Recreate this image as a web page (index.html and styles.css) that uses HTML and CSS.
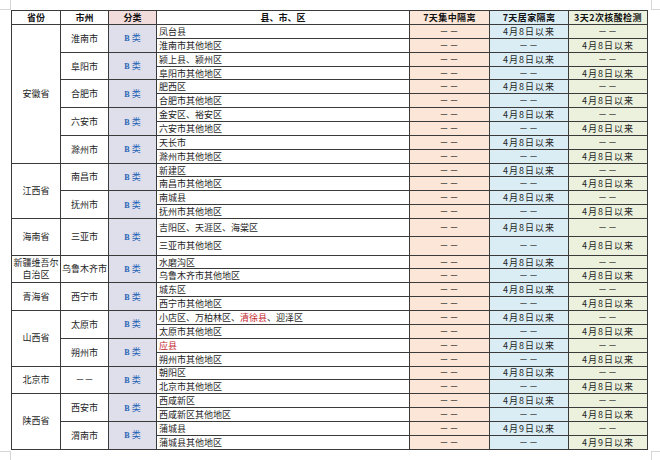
FILE: index.html
```html
<!DOCTYPE html>
<html lang="zh-CN">
<head>
<meta charset="utf-8">
<title>风险地区管控表</title>
<link rel="stylesheet" href="styles.css">
</head>
<body>
<div class="page">
  <span class="mark mark-tl"></span>
  <span class="mark mark-tr"></span>
  <span class="mark mark-bl"></span>
  <span class="mark mark-br"></span>
  <table class="t">
    <colgroup>
      <col class="w-p"><col class="w-c"><col class="w-k"><col class="w-a"><col class="w-x"><col class="w-y"><col class="w-z">
    </colgroup>
    <thead>
      <tr class="hd">
        <th>省份</th><th>市州</th><th class="k-h">分类</th><th>县、市、区</th><th class="x">7天集中隔离</th><th class="y">7天居家隔离</th><th class="z">3天2次核酸检测</th>
      </tr>
    </thead>
    <tbody>
      <tr><td rowspan="10" class="p">安徽省</td><td rowspan="2">淮南市</td><td rowspan="2" class="k"><b>B</b>类</td><td class="a">凤台县</td><td class="x">－－</td><td class="y">4月8日以来</td><td class="z">－－</td></tr>
      <tr><td class="a">淮南市其他地区</td><td class="x">－－</td><td class="y">－－</td><td class="z">4月8日以来</td></tr>
      <tr><td rowspan="2">阜阳市</td><td rowspan="2" class="k"><b>B</b>类</td><td class="a">颍上县、颍州区</td><td class="x">－－</td><td class="y">4月8日以来</td><td class="z">－－</td></tr>
      <tr><td class="a">阜阳市其他地区</td><td class="x">－－</td><td class="y">－－</td><td class="z">4月8日以来</td></tr>
      <tr><td rowspan="2">合肥市</td><td rowspan="2" class="k"><b>B</b>类</td><td class="a">肥西区</td><td class="x">－－</td><td class="y">4月8日以来</td><td class="z">－－</td></tr>
      <tr><td class="a">合肥市其他地区</td><td class="x">－－</td><td class="y">－－</td><td class="z">4月8日以来</td></tr>
      <tr><td rowspan="2">六安市</td><td rowspan="2" class="k"><b>B</b>类</td><td class="a">金安区、裕安区</td><td class="x">－－</td><td class="y">4月8日以来</td><td class="z">－－</td></tr>
      <tr><td class="a">六安市其他地区</td><td class="x">－－</td><td class="y">－－</td><td class="z">4月8日以来</td></tr>
      <tr><td rowspan="2">滁州市</td><td rowspan="2" class="k"><b>B</b>类</td><td class="a">天长市</td><td class="x">－－</td><td class="y">4月8日以来</td><td class="z">－－</td></tr>
      <tr><td class="a">滁州市其他地区</td><td class="x">－－</td><td class="y">－－</td><td class="z">4月8日以来</td></tr>

      <tr><td rowspan="4" class="p">江西省</td><td rowspan="2">南昌市</td><td rowspan="2" class="k"><b>B</b>类</td><td class="a">新建区</td><td class="x">－－</td><td class="y">4月8日以来</td><td class="z">－－</td></tr>
      <tr><td class="a">南昌市其他地区</td><td class="x">－－</td><td class="y">－－</td><td class="z">4月8日以来</td></tr>
      <tr><td rowspan="2">抚州市</td><td rowspan="2" class="k"><b>B</b>类</td><td class="a">南城县</td><td class="x">－－</td><td class="y">4月8日以来</td><td class="z">－－</td></tr>
      <tr><td class="a">抚州市其他地区</td><td class="x">－－</td><td class="y">－－</td><td class="z">4月8日以来</td></tr>

      <tr class="tall"><td rowspan="2" class="p">海南省</td><td rowspan="2">三亚市</td><td rowspan="2" class="k"><b>B</b>类</td><td class="a">吉阳区、天涯区、海棠区</td><td class="x">－－</td><td class="y">4月8日以来</td><td class="z">－－</td></tr>
      <tr class="tall"><td class="a">三亚市其他地区</td><td class="x">－－</td><td class="y">－－</td><td class="z">4月8日以来</td></tr>

      <tr><td rowspan="2" class="p">新疆维吾尔<br>自治区</td><td rowspan="2">乌鲁木齐市</td><td rowspan="2" class="k"><b>B</b>类</td><td class="a">水磨沟区</td><td class="x">－－</td><td class="y">4月8日以来</td><td class="z">－－</td></tr>
      <tr><td class="a">乌鲁木齐市其他地区</td><td class="x">－－</td><td class="y">－－</td><td class="z">4月8日以来</td></tr>

      <tr><td rowspan="2" class="p">青海省</td><td rowspan="2">西宁市</td><td rowspan="2" class="k"><b>B</b>类</td><td class="a">城东区</td><td class="x">－－</td><td class="y">4月8日以来</td><td class="z">－－</td></tr>
      <tr><td class="a">西宁市其他地区</td><td class="x">－－</td><td class="y">－－</td><td class="z">4月8日以来</td></tr>

      <tr><td rowspan="4" class="p">山西省</td><td rowspan="2">太原市</td><td rowspan="2" class="k"><b>B</b>类</td><td class="a">小店区、万柏林区、<span class="red">清徐县</span>、迎泽区</td><td class="x">－－</td><td class="y">4月8日以来</td><td class="z">－－</td></tr>
      <tr><td class="a">太原市其他地区</td><td class="x">－－</td><td class="y">－－</td><td class="z">4月8日以来</td></tr>
      <tr><td rowspan="2">朔州市</td><td rowspan="2" class="k"><b>B</b>类</td><td class="a"><span class="red">应县</span></td><td class="x">－－</td><td class="y">4月8日以来</td><td class="z">－－</td></tr>
      <tr><td class="a">朔州市其他地区</td><td class="x">－－</td><td class="y">－－</td><td class="z">4月8日以来</td></tr>

      <tr><td rowspan="2" class="p">北京市</td><td rowspan="2">－－</td><td rowspan="2" class="k"><b>B</b>类</td><td class="a">朝阳区</td><td class="x">－－</td><td class="y">4月8日以来</td><td class="z">－－</td></tr>
      <tr><td class="a">北京市其他地区</td><td class="x">－－</td><td class="y">－－</td><td class="z">4月8日以来</td></tr>

      <tr><td rowspan="4" class="p">陕西省</td><td rowspan="2">西安市</td><td rowspan="2" class="k"><b>B</b>类</td><td class="a">西咸新区</td><td class="x">－－</td><td class="y">4月8日以来</td><td class="z">－－</td></tr>
      <tr><td class="a">西咸新区其他地区</td><td class="x">－－</td><td class="y">－－</td><td class="z">4月8日以来</td></tr>
      <tr><td rowspan="2">渭南市</td><td rowspan="2" class="k"><b>B</b>类</td><td class="a">蒲城县</td><td class="x">－－</td><td class="y">4月9日以来</td><td class="z">－－</td></tr>
      <tr><td class="a">蒲城县其他地区</td><td class="x">－－</td><td class="y">－－</td><td class="z">4月9日以来</td></tr>
    </tbody>
  </table>
</div>
</body>
</html>
```

FILE: styles.css
```css
html, body {
  margin: 0;
  padding: 0;
  background: #ffffff;
}

.page {
  position: relative;
  width: 660px;
  height: 460px;
  padding: 10px 0 0 11px;
  box-sizing: border-box;
  font-family: "Noto Sans CJK SC", "Liberation Sans", sans-serif;
  color: #1e1e1e;
}

.mark {
  position: absolute;
  border-color: #d6d6d6;
  border-style: solid;
  width: 10px;
  height: 9px;
}
.mark-tl { left: 0; top: 0; border-width: 0 1px 1px 0; }
.mark-tr { left: 651px; top: 0; border-width: 0 0 1px 1px; }
.mark-bl { left: 0; top: 451px; border-width: 1px 1px 0 0; }
.mark-br { left: 651px; top: 451px; border-width: 1px 0 0 1px; }

.t {
  border-collapse: collapse;
  table-layout: fixed;
  width: 636px;
  border: 1px solid #2a2a2a;
}

.w-p { width: 49px; }
.w-c { width: 48px; }
.w-k { width: 48px; }
.w-a { width: 253px; }
.w-x { width: 80px; }
.w-y { width: 79px; }
.w-z { width: 79px; }

.t th,
.t td {
  border: 1px solid #3a3a3a;
  padding: 0;
  font-size: 9px;
  line-height: 11px;
  text-align: center;
  vertical-align: middle;
  overflow: hidden;
  white-space: nowrap;
}

.t th {
  font-weight: 700;
  color: #111;
}

.t th.x,
.t th.y,
.t th.z {
  letter-spacing: 0.4px;
}

.hd { height: 14px; }
.t tbody tr { height: 13.86px; }
.t tbody tr.tall { height: 18.3px; }

.t td.p {
  line-height: 12px;
}

.t td.a {
  text-align: left;
  padding-left: 2px;
}

.k-h { background: #f2dcdb; }
.t td.k {
  background: #dfdeeb;
  color: #1f63b4;
}
.t td.k b {
  font-family: "Liberation Serif", serif;
  font-size: 8px;
  font-weight: 700;
  margin-right: 2px;
}

.x { background: #fce6d8; }
.y { background: #dbedf4; }
.z { background: #ebf1dd; }

.t td.y,
.t td.z {
  letter-spacing: 1px;
}
.t td.x {
  letter-spacing: 1px;
}

.red { color: #c4252c; }
```
